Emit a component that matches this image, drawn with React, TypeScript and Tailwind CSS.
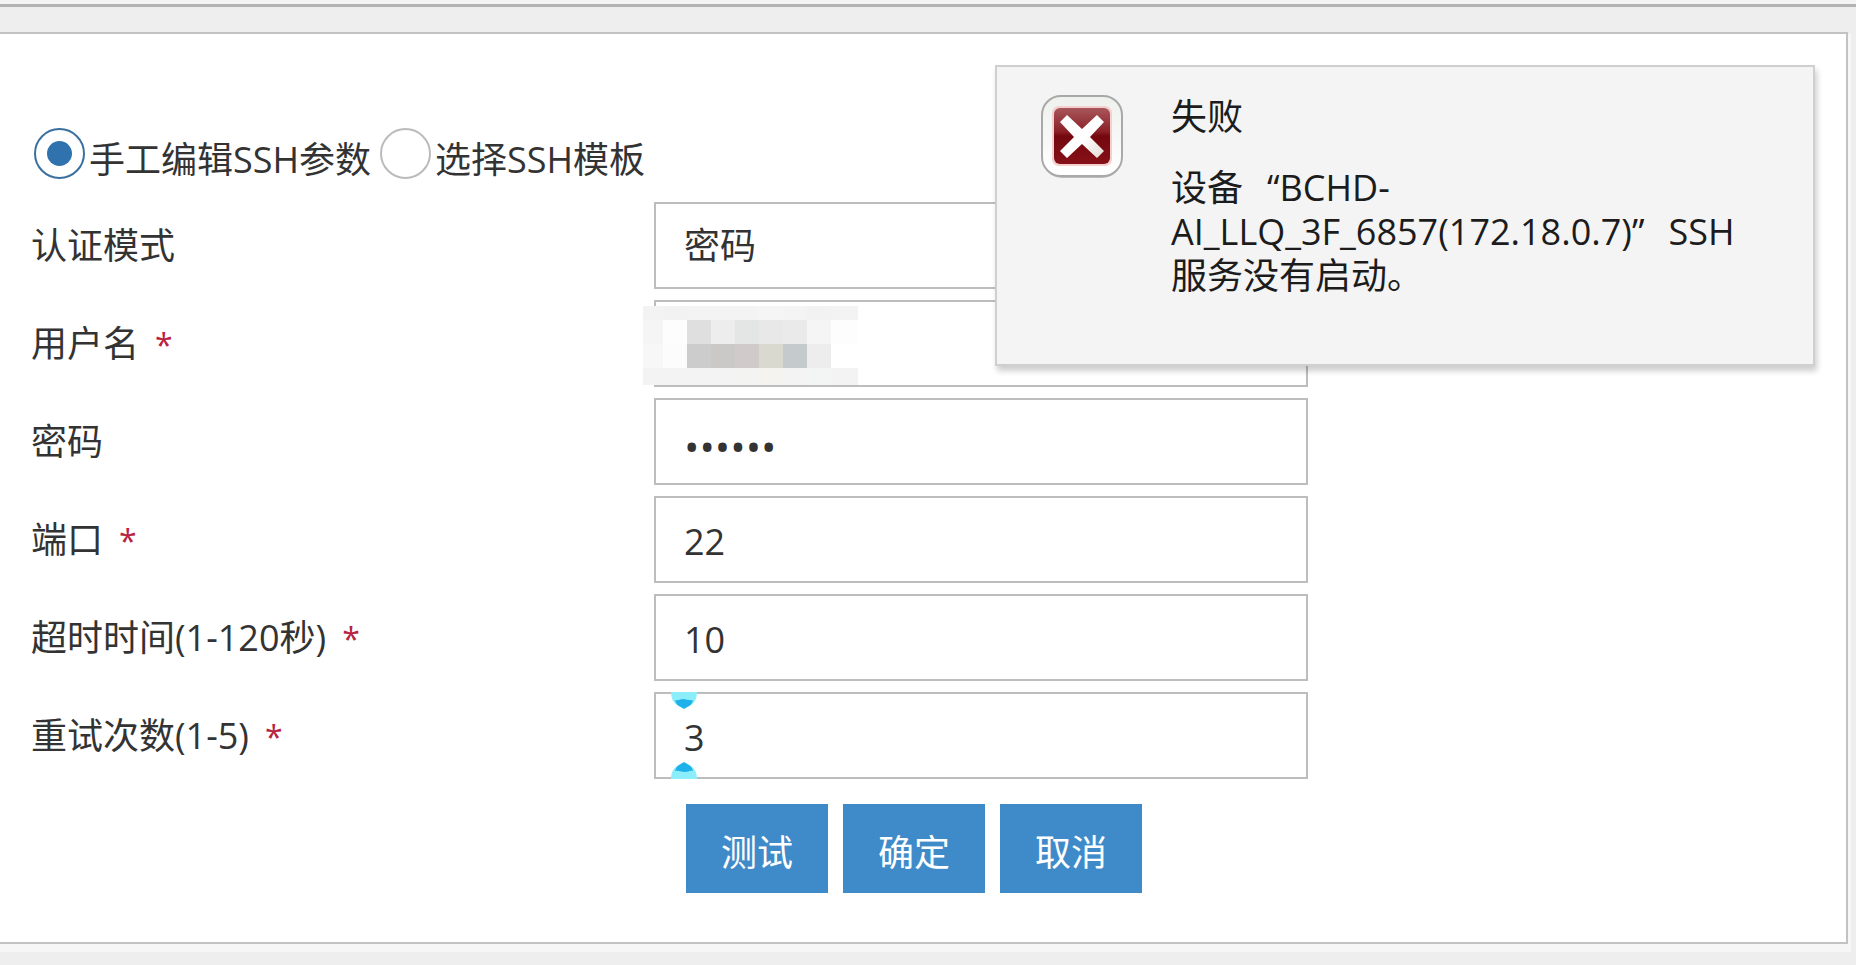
import React from "react";

type Field = {
  id: string;
  label: string;
  required?: boolean;
  type?: string;
  value: string;
};

const fields: Field[] = [
  { id: 'username', label: '用户名', required: true, value: '' },
  { id: 'password', label: '密码', type: 'password', value: '123456' },
  { id: 'port', label: '端口', required: true, value: '22' },
  { id: 'timeout', label: '超时时间(1-120秒)', required: true, value: '10' },
  { id: 'retries', label: '重试次数(1-5)', required: true, value: '3' },
];

const modes = [
  { id: 'manual', title: '手工编辑SSH参数', checked: true },
  { id: 'template', title: '选择SSH模板', checked: false },
];

const actions = ['测试', '确定', '取消'];

// one entry per mosaic cell, row by row
const mosaic = [
  '#f3f3f3', '#f2f2f2', '#f3f3f3', '#f3f3f3', '#f3f3f3', '#f4f5f4', '#f4f4f4', '#f2f2f2', '#f3f3f3',
  '#f5f5f5', '#fdfdfd', '#dfdfdf', '#ededed', '#e3e6e5', '#e8e8e8', '#eaeaea', '#f5f5f5', '#fdfdfd',
  '#f7f7f7', '#fcfcfc', '#cccccc', '#cbc9c8', '#d0cbca', '#d9d9d0', '#c5cacd', '#ededed', '#ffffff',
  '#f3f3f3', '#f3f3f3', '#f3f3f3', '#f3f3f3', '#f3f3f2', '#f4f3f0', '#f3f3f3', '#f2f5f4', '#f3f3f3',
];

const box = "h-[87px] w-full appearance-none rounded-none border-2 border-[#bdbdbd] bg-white px-[28px] text-[#333] outline-none";

function Mosaic() {
  return (
    <div className="absolute -left-[11px] top-[6px] grid grid-cols-[20px_repeat(7,24px)_27px] grid-rows-[14px_24px_24px_17px]">
      {mosaic.map((c, i) => (
        <span key={i} style={{ backgroundColor: c }} />
      ))}
    </div>
  );
}

function Handle({ className }: { className: string }) {
  return (
    <svg className={className} width="26" height="17" viewBox="0 0 26 17">
      <path d="M0 0h26c0 7-3 12-8 14-3 3-7 3-10 0C3 12 0 7 0 0z" fill="#8ceefb" />
      <path d="M4 8c3 1 5-1 8-1s7 2 10 1c-1 4-3 6-6 7l-3 2-3-2c-3-1-5-3-6-7z" fill="#1fb2ea" />
    </svg>
  );
}

function ErrorIcon() {
  return (
    <svg className="shrink-0" width="82" height="84" viewBox="0 0 82 84">
      <defs>
        <linearGradient id="frame" x1="0" y1="0" x2="0" y2="1">
          <stop offset="0" stopColor="#eef1ec" />
          <stop offset="1" stopColor="#ffffff" />
        </linearGradient>
        <linearGradient id="red" x1="0" y1="0" x2="0" y2="1">
          <stop offset="0" stopColor="#a8575c" />
          <stop offset="0.42" stopColor="#8a2027" />
          <stop offset="0.5" stopColor="#74080f" />
          <stop offset="1" stopColor="#861018" />
        </linearGradient>
        <linearGradient id="cross" x1="0" y1="0" x2="1" y2="1">
          <stop offset="0" stopColor="#ffffff" />
          <stop offset="0.55" stopColor="#ffffff" />
          <stop offset="1" stopColor="#e2dcd2" />
        </linearGradient>
      </defs>
      <rect x="2" y="3" width="78" height="80" rx="19" fill="#bcbcbc" />
      <rect x="1" y="1" width="80" height="80" rx="19" fill="url(#frame)" stroke="#a9a9a9" strokeWidth="2" />
      <rect x="11" y="11" width="60" height="60" rx="7" fill="#f3d0cf" />
      <rect x="13" y="13" width="56" height="56" rx="6" fill="url(#red)" />
      <path d="M26 20l15 14 15-14 7 7-14 15 14 14-7 7-15-14-15 14-7-7 14-14-14-15z" fill="url(#cross)" />
    </svg>
  );
}

function Toast() {
  return (
    <div role="alert" className="absolute right-[31px] top-[31px] flex h-[301px] w-[820px] gap-[48px] border-2 border-[#cfcfcf] bg-[#f4f4f4] pl-[44px] pr-[50px] pt-[28px] text-[#1c1c1c] shadow-[2px_5px_6px_rgba(0,0,0,0.2)]">
      <ErrorIcon />
      <div className="leading-[44px]">
        <p>失败</p>
        {/* quotes take a full character cell */}
        <p className="mt-[27px]">
          设备<span className="ml-6">“</span>BCHD-AI_LLQ_3F_6857(172.18.0.7)<span className="mr-6">”</span>SSH服务没有启动。
        </p>
      </div>
    </div>
  );
}

export default function App() {
  return (
    <div lang="zh-CN" className="flex min-h-screen flex-col bg-[#eeeeee] font-['Open_Sans','Noto_Sans_CJK_SC',sans-serif] text-[36px] leading-[51px] text-[#333]">
      <div className="h-[7px] border-b-[3px] border-[#b3b3b3] bg-[#f4f4f4]" />
      <div className="h-[25px] bg-[#eeeeef]" />
      <main className="relative mr-[8px] border-y-2 border-r-2 border-[#c2c2c2] bg-white pb-[49px] pl-[31px] pr-[32px] pt-[94px] shadow-[0_5px_0_3px_#f6f6f6]">
        <form onSubmit={(e) => e.preventDefault()}>
          <div className="flex gap-[9px] pl-[3px]">
            {modes.map((m) => (
              <label key={m.id} className="flex gap-[4px]">
                <input
                  type="radio"
                  name="mode"
                  defaultChecked={m.checked}
                  className="grid size-[51px] shrink-0 appearance-none place-items-center rounded-full border-2 border-[#bbb] bg-white checked:border-[#3a70a0] checked:before:size-[25px] checked:before:rounded-full checked:before:bg-[#2f72ae] checked:before:content-['']"
                />
                <span className="pt-[6px]">{m.title}</span>
              </label>
            ))}
          </div>

          <div className="mt-[17px] flex flex-col gap-[11px]">
            <div className="flex items-center">
              <label htmlFor="auth" className="w-[623px] shrink-0">认证模式</label>
              <div className="w-full max-w-[654px]">
                <select id="auth" className={box}>
                  <option>密码</option>
                </select>
              </div>
            </div>
            {fields.map((f) => (
              <div key={f.id} className="flex items-center">
                <label htmlFor={f.id} className="w-[623px] shrink-0">
                  {f.label}
                  {f.required && <span className="ml-4 text-[32px] text-[#b8233f]">*</span>}
                </label>
                <div className="relative w-full max-w-[654px]">
                  <input
                    id={f.id}
                    type={f.type ?? 'text'}
                    defaultValue={f.value}
                    className={f.type === 'password' ? `${box} pt-2 text-[41px]` : `${box} pt-1`}
                  />
                  {f.id === 'username' && <Mosaic />}
                  {f.id === 'retries' && (
                    <>
                      <Handle className="absolute left-[17px] top-0" />
                      <Handle className="absolute bottom-0 left-[17px] rotate-180" />
                    </>
                  )}
                </div>
              </div>
            ))}
          </div>

          <div className="mt-[25px] flex gap-[15px] pl-[655px]">
            {actions.map((a) => (
              <button key={a} type="button" className="h-[89px] w-[142px] bg-[#3f8bca] pt-2 text-white">
                {a}
              </button>
            ))}
          </div>
        </form>
        <Toast />
      </main>
    </div>
  );
}
